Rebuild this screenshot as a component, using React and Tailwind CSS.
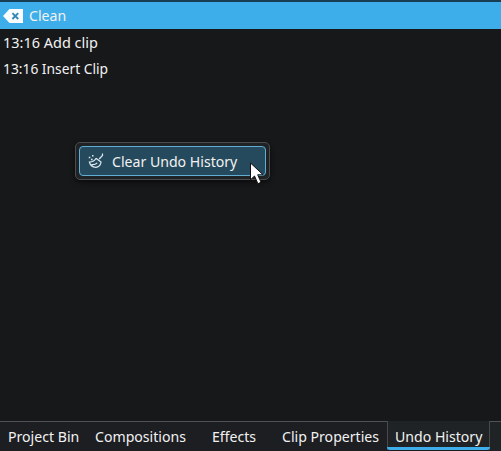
function CleanIcon() {
  return (
    <svg className="h-[14px] w-5 shrink-0" viewBox="0 0 20 14">
      <path d="M0 7 6.5 0H20v14H6.5z" fill="#fafdff" />
      <path d="m9.4 4.2 5.8 5.8m0-5.8L9.4 10" stroke="#3487b5" strokeWidth="1.9" />
    </svg>
  );
}

function BroomIcon() {
  return (
    <svg className="size-4 shrink-0" viewBox="0 0 16 16" fill="none" stroke="#dce8ee" strokeWidth="1.2">
      <path d="M14.5.5v2L11.2 6M8 5.2l5.3 4M8 5.2C6.8 7.7 4.8 8.9 1.4 9c.9 3.4 3.2 5.2 6.4 5.4 3-.2 4.7-2.3 5.3-5.2M3.5 11.6c2.4.3 4.3-.3 5.8-1.8" />
      <path d="M.8 4.5h1.5M3 6.6h1.6M4 2.8h1.5" strokeWidth="1.5" />
    </svg>
  );
}

function Label({ children, className = "" }) {
  return <span className={"inline-block origin-left whitespace-nowrap " + (className || "scale-x-[0.94]")}>{children}</span>;
}

function Tab({ children, className }) {
  return (
    <div className={"flex shrink-0 items-center " + className}>
      <Label>{children}</Label>
    </div>
  );
}

export default function App() {
  return (
    <main className="relative flex h-[451px] w-[501px] flex-col overflow-hidden bg-[#17181a] font-['Noto_Sans','Open_Sans',sans-serif] text-[15px] leading-5 text-[#f2f2f2]">
      <header className="flex h-[29px] shrink-0 items-center border-t-2 border-[#173e54] bg-[#3daee9] pl-[3px]">
        <CleanIcon />
        <span className="ml-[6px] flex pb-[2px]"><Label>Clean</Label></span>
      </header>
      <section className="grow pl-[3px]">
        <div className="flex h-[26px] items-center pb-px"><Label className="scale-x-[0.965]">13:16 Add clip</Label></div>
        <div className="flex h-[26px] items-center"><Label className="scale-x-[0.92]">13:16 Insert Clip</Label></div>
      </section>
      <nav className="flex h-[30px] shrink-0 bg-[#1d1e22]">
        <Tab className="w-[87px] border-t border-[#505153] pb-px pl-2">Project Bin</Tab>
        <Tab className="w-[117px] border-t border-[#505153] pb-px pl-2">Compositions</Tab>
        <Tab className="w-[70px] border-t border-[#505153] pb-px pl-2">Effects</Tab>
        <Tab className="w-[113px] border-t border-[#505153] pb-px pl-2">Clip Properties</Tab>
        <div className="relative h-[29px] w-[103px] border-x border-[#47494b] bg-[#202326]">
          <Tab className="h-[30px] pl-[7px]">Undo History</Tab>
          <span className="absolute -inset-x-px bottom-0 h-[3px] rounded-b-[3px] bg-[#3daee9]" />
        </div>
        <div className="grow border-t border-[#505153] bg-[#202326]" />
      </nav>
      <div className="absolute left-[75px] top-[142px] h-[38px] w-[195px] rounded-[5px] border border-[#4b4c4e] bg-[#202326] p-[3px] shadow-[0_2px_5px_#0009]">
        <div className="flex h-full items-center rounded-[4px] border border-[#62add3] bg-[#264a5d] pl-2">
          <BroomIcon />
          <span className="ml-2 flex pb-px"><Label>Clear Undo History</Label></span>
        </div>
      </div>
      <svg className="absolute left-[249px] top-[162px] h-[23px] w-4" viewBox="0 0 16 23">
        <path d="M1.5 1v16.8l4-3.8 3.4 7.7 3.2-1.4-3.4-7.5h5.4z" fill="#fff" stroke="#111" />
      </svg>
    </main>
  );
}
